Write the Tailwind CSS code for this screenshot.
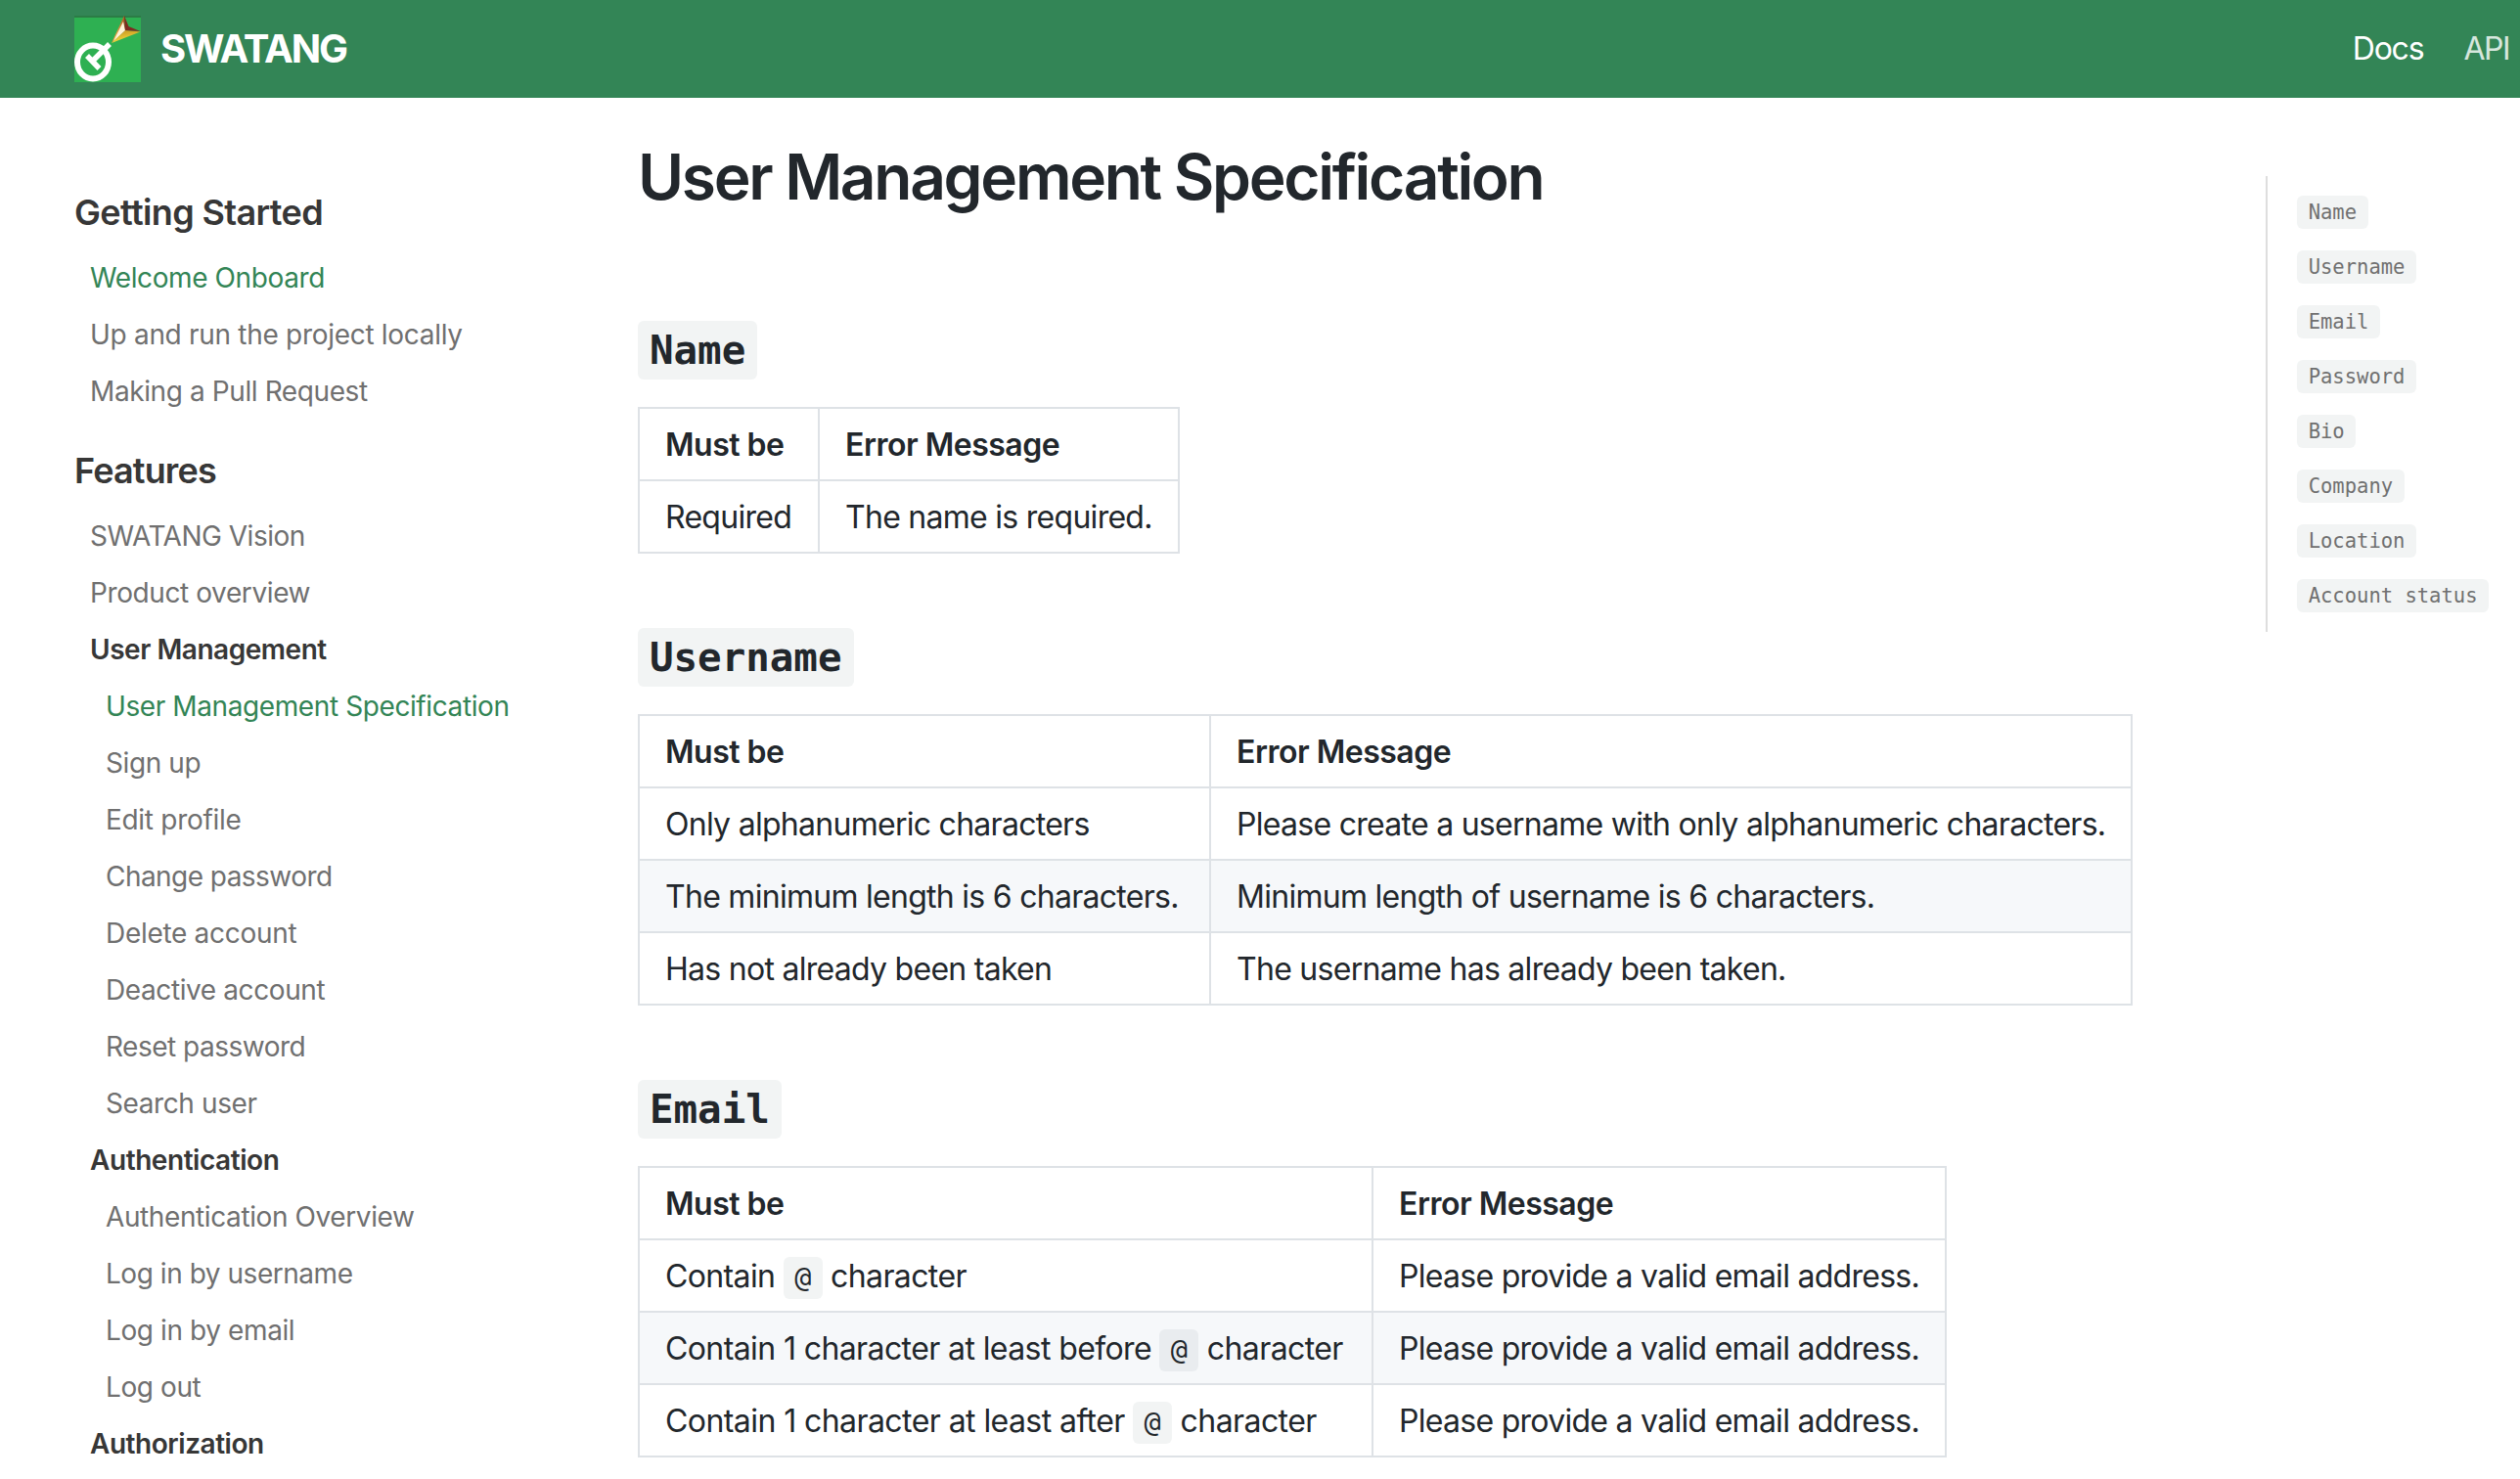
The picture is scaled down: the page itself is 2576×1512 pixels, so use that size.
<!DOCTYPE html>
<html lang="en">
<head>
<meta charset="utf-8">
<title>User Management Specification</title>
<script src="https://cdn.jsdelivr.net/npm/@tailwindcss/browser@4"></script>
</head>
<body class="h-[1512px] overflow-hidden bg-white font-[Inter,sans-serif] text-[#22272c]">
<header class="flex h-[100px] items-center bg-[#338556] pl-[76px] pr-[11px] text-white">
  <svg class="h-[68px] w-[68px]" viewBox="0 0 68 68">
    <defs>
      <linearGradient id="g1" x1="0" y1="0" x2="1" y2="0.4"><stop offset="0.15" stop-color="#c4701c"/><stop offset="0.5" stop-color="#f0a848"/><stop offset="1" stop-color="#8a3410"/></linearGradient>
      <linearGradient id="g2" x1="0" y1="0" x2="0.3" y2="1"><stop offset="0" stop-color="#c89020"/><stop offset="1" stop-color="#f2e040"/></linearGradient>
    </defs>
    <rect width="68" height="68" fill="#2eb052"/>
    <rect width="68" height="2" fill="#2b7c45"/>
    <path d="M51 0 L38 28 L52 15 Z" fill="url(#g1)"/>
    <path d="M38 28 L52 15 L67.500 16.500 Z" fill="url(#g2)"/>
    <path d="M50 6 L52 15 L40 26 Z" fill="#fff3d8"/>
    <path d="M51 0 L55.500 11 L67.500 16 L52 15 Z" fill="#7e2a20"/>
    <ellipse cx="19" cy="47.500" rx="16" ry="17" fill="none" stroke="#fff" stroke-width="6"/>
    <path d="M36 29 L18 47 M13 41 L25.500 54" fill="none" stroke="#fff" stroke-width="5.500"/>
  </svg>
  <a class="ml-[20px] text-[40px] font-bold leading-[48px] tracking-[-2.1px]">SWATANG</a>
  <nav class="ml-auto flex gap-[41px] text-[32px] leading-[48px]">
    <a class="tracking-[-1.2px]">Docs</a>
    <a class="tracking-[-1.5px] text-white/80">API</a>
  </nav>
</header>
<div class="flex">
  <aside class="w-[652px] shrink-0 pl-[76px] pt-[95px] text-[28px] leading-[42px] tracking-[-0.4px] text-[#707070]">
    <h3 class="mb-[16px] text-[36px] font-semibold leading-[44px] tracking-[-0.64px] text-[#373737]">Getting Started</h3>
    <ul class="mb-[30px] pl-[16px]">
      <li class="py-[8px] text-[#338556]">Welcome Onboard</li>
      <li class="py-[8px] tracking-[-0.3px]">Up and run the project locally</li>
      <li class="py-[8px]">Making a Pull Request</li>
    </ul>
    <h3 class="mb-[16px] text-[36px] font-semibold leading-[44px] tracking-[-0.84px] text-[#373737]">Features</h3>
    <ul class="whitespace-nowrap pl-[16px]">
      <li class="py-[8px] tracking-[-0.5px]">SWATANG Vision</li>
      <li class="py-[8px]">Product overview</li>
      <li class="py-[8px] font-semibold tracking-[-0.46px] text-[#373737]">User Management</li>
      <li class="py-[8px] pl-[16px] text-[#338556]">User Management Specification</li>
      <li class="py-[8px] pl-[16px]">Sign up</li>
      <li class="py-[8px] pl-[16px] tracking-[-0.3px]">Edit profile</li>
      <li class="py-[8px] pl-[16px] tracking-[-0.55px]">Change password</li>
      <li class="py-[8px] pl-[16px] tracking-[-0.3px]">Delete account</li>
      <li class="py-[8px] pl-[16px]">Deactive account</li>
      <li class="py-[8px] pl-[16px] tracking-[-0.5px]">Reset password</li>
      <li class="py-[8px] pl-[16px]">Search user</li>
      <li class="py-[8px] font-semibold tracking-[-0.44px] text-[#373737]">Authentication</li>
      <li class="py-[8px] pl-[16px]">Authentication Overview</li>
      <li class="py-[8px] pl-[16px] tracking-[-0.46px]">Log in by username</li>
      <li class="py-[8px] pl-[16px]">Log in by email</li>
      <li class="py-[8px] pl-[16px]">Log out</li>
      <li class="py-[8px] font-semibold tracking-[-0.46px] text-[#373737]">Authorization</li>
    </ul>
  </aside>
  <main class="w-[1664px] shrink-0 pt-[42px] text-[32px] leading-[48px] tracking-[-0.72px]">
    <h1 class="mb-[109px] text-[64px] font-semibold leading-[77px] tracking-[-2.3px]">User Management Specification</h1>

    <h2 class="mb-[28px] flex"><code class="h-[60px] rounded-[6px] bg-[#f2f4f4] px-[12px] font-['DejaVu_Sans_Mono',monospace] text-[40.8px] font-bold leading-[60px] tracking-normal">Name</code></h2>
    <table class="mb-[76px] w-[554px] table-fixed border-collapse text-left">
      <colgroup><col class="w-[184px]"><col></colgroup>
      <tr class="h-[74px]"><th class="border-2 border-[#dee2e6] pl-[26px] pt-[2px] font-semibold tracking-[-0.49px]">Must be</th><th class="border-2 border-[#dee2e6] pl-[26px] pt-[2px] font-semibold tracking-[-0.49px]">Error Message</th></tr>
      <tr class="h-[74px]"><td class="border-2 border-[#dee2e6] pl-[26px] pt-[2px]">Required</td><td class="border-2 border-[#dee2e6] pl-[26px] pt-[2px]">The name is required.</td></tr>
    </table>

    <h2 class="mb-[28px] flex"><code class="h-[60px] rounded-[6px] bg-[#f2f4f4] px-[12px] font-['DejaVu_Sans_Mono',monospace] text-[40.8px] font-bold leading-[60px] tracking-normal">Username</code></h2>
    <table class="mb-[76px] w-[1528px] table-fixed border-collapse text-left">
      <colgroup><col class="w-[584px]"><col></colgroup>
      <tr class="h-[74px]"><th class="border-2 border-[#dee2e6] pl-[26px] pt-[2px] font-semibold tracking-[-0.49px]">Must be</th><th class="border-2 border-[#dee2e6] pl-[26px] pt-[2px] font-semibold tracking-[-0.49px]">Error Message</th></tr>
      <tr class="h-[74px]"><td class="border-2 border-[#dee2e6] pl-[26px] pt-[2px]">Only alphanumeric characters</td><td class="border-2 border-[#dee2e6] pl-[26px] pt-[2px]">Please create a username with only alphanumeric characters.</td></tr>
      <tr class="h-[74px] bg-[#f6f8fa]"><td class="border-2 border-[#dee2e6] pl-[26px] pt-[2px]">The minimum length is 6 characters.</td><td class="border-2 border-[#dee2e6] pl-[26px] pt-[2px]">Minimum length of username is 6 characters.</td></tr>
      <tr class="h-[74px]"><td class="border-2 border-[#dee2e6] pl-[26px] pt-[2px]">Has not already been taken</td><td class="border-2 border-[#dee2e6] pl-[26px] pt-[2px]">The username has already been taken.</td></tr>
    </table>

    <h2 class="mb-[28px] flex"><code class="h-[60px] rounded-[6px] bg-[#f2f4f4] px-[12px] font-['DejaVu_Sans_Mono',monospace] text-[40.8px] font-bold leading-[60px] tracking-normal">Email</code></h2>
    <table class="w-[1338px] table-fixed border-collapse text-left">
      <colgroup><col class="w-[750px]"><col></colgroup>
      <tr class="h-[74px]"><th class="border-2 border-[#dee2e6] pl-[26px] pt-[2px] font-semibold tracking-[-0.49px]">Must be</th><th class="border-2 border-[#dee2e6] pl-[26px] pt-[2px] font-semibold tracking-[-0.49px]">Error Message</th></tr>
      <tr class="h-[74px]"><td class="border-2 border-[#dee2e6] pl-[26px] pt-[2px] tracking-[-0.62px]">Contain <code class="rounded-[6px] bg-[#f2f4f4] px-[11.4px] py-[5.25px] font-['DejaVu_Sans_Mono',monospace] text-[28.5px] leading-none tracking-normal">@</code> character</td><td class="border-2 border-[#dee2e6] pl-[26px] pt-[2px]">Please provide a valid email address.</td></tr>
      <tr class="h-[74px] bg-[#f6f8fa]"><td class="border-2 border-[#dee2e6] pl-[26px] pt-[2px] tracking-[-0.6px]">Contain 1 character at least before <code class="rounded-[6px] bg-[#e9ecef] px-[11.4px] py-[5.25px] font-['DejaVu_Sans_Mono',monospace] text-[28.5px] leading-none tracking-normal">@</code> character</td><td class="border-2 border-[#dee2e6] pl-[26px] pt-[2px]">Please provide a valid email address.</td></tr>
      <tr class="h-[74px]"><td class="border-2 border-[#dee2e6] pl-[26px] pt-[2px] tracking-[-0.57px]">Contain 1 character at least after <code class="rounded-[6px] bg-[#f2f4f4] px-[11.4px] py-[5.25px] font-['DejaVu_Sans_Mono',monospace] text-[28.5px] leading-none tracking-normal">@</code> character</td><td class="border-2 border-[#dee2e6] pl-[26px] pt-[2px]">Please provide a valid email address.</td></tr>
    </table>
  </main>
  <nav class="mt-[80px] flex h-[466px] flex-col items-start gap-[22px] border-l-2 border-[#dedede] pl-[30px] pt-[20px] font-['DejaVu_Sans_Mono',monospace] text-[20.5px] leading-[34px] text-[#707070]">
    <code class="whitespace-nowrap rounded-[6px] bg-[#f2f4f4] px-[11.7px] font-['DejaVu_Sans_Mono',monospace]">Name</code>
    <code class="whitespace-nowrap rounded-[6px] bg-[#f2f4f4] px-[11.7px] font-['DejaVu_Sans_Mono',monospace]">Username</code>
    <code class="whitespace-nowrap rounded-[6px] bg-[#f2f4f4] px-[11.7px] font-['DejaVu_Sans_Mono',monospace]">Email</code>
    <code class="whitespace-nowrap rounded-[6px] bg-[#f2f4f4] px-[11.7px] font-['DejaVu_Sans_Mono',monospace]">Password</code>
    <code class="whitespace-nowrap rounded-[6px] bg-[#f2f4f4] px-[11.7px] font-['DejaVu_Sans_Mono',monospace]">Bio</code>
    <code class="whitespace-nowrap rounded-[6px] bg-[#f2f4f4] px-[11.7px] font-['DejaVu_Sans_Mono',monospace]">Company</code>
    <code class="whitespace-nowrap rounded-[6px] bg-[#f2f4f4] px-[11.7px] font-['DejaVu_Sans_Mono',monospace]">Location</code>
    <code class="whitespace-nowrap rounded-[6px] bg-[#f2f4f4] px-[11.7px] font-['DejaVu_Sans_Mono',monospace]">Account status</code>
  </nav>
</div>
</body>
</html>
